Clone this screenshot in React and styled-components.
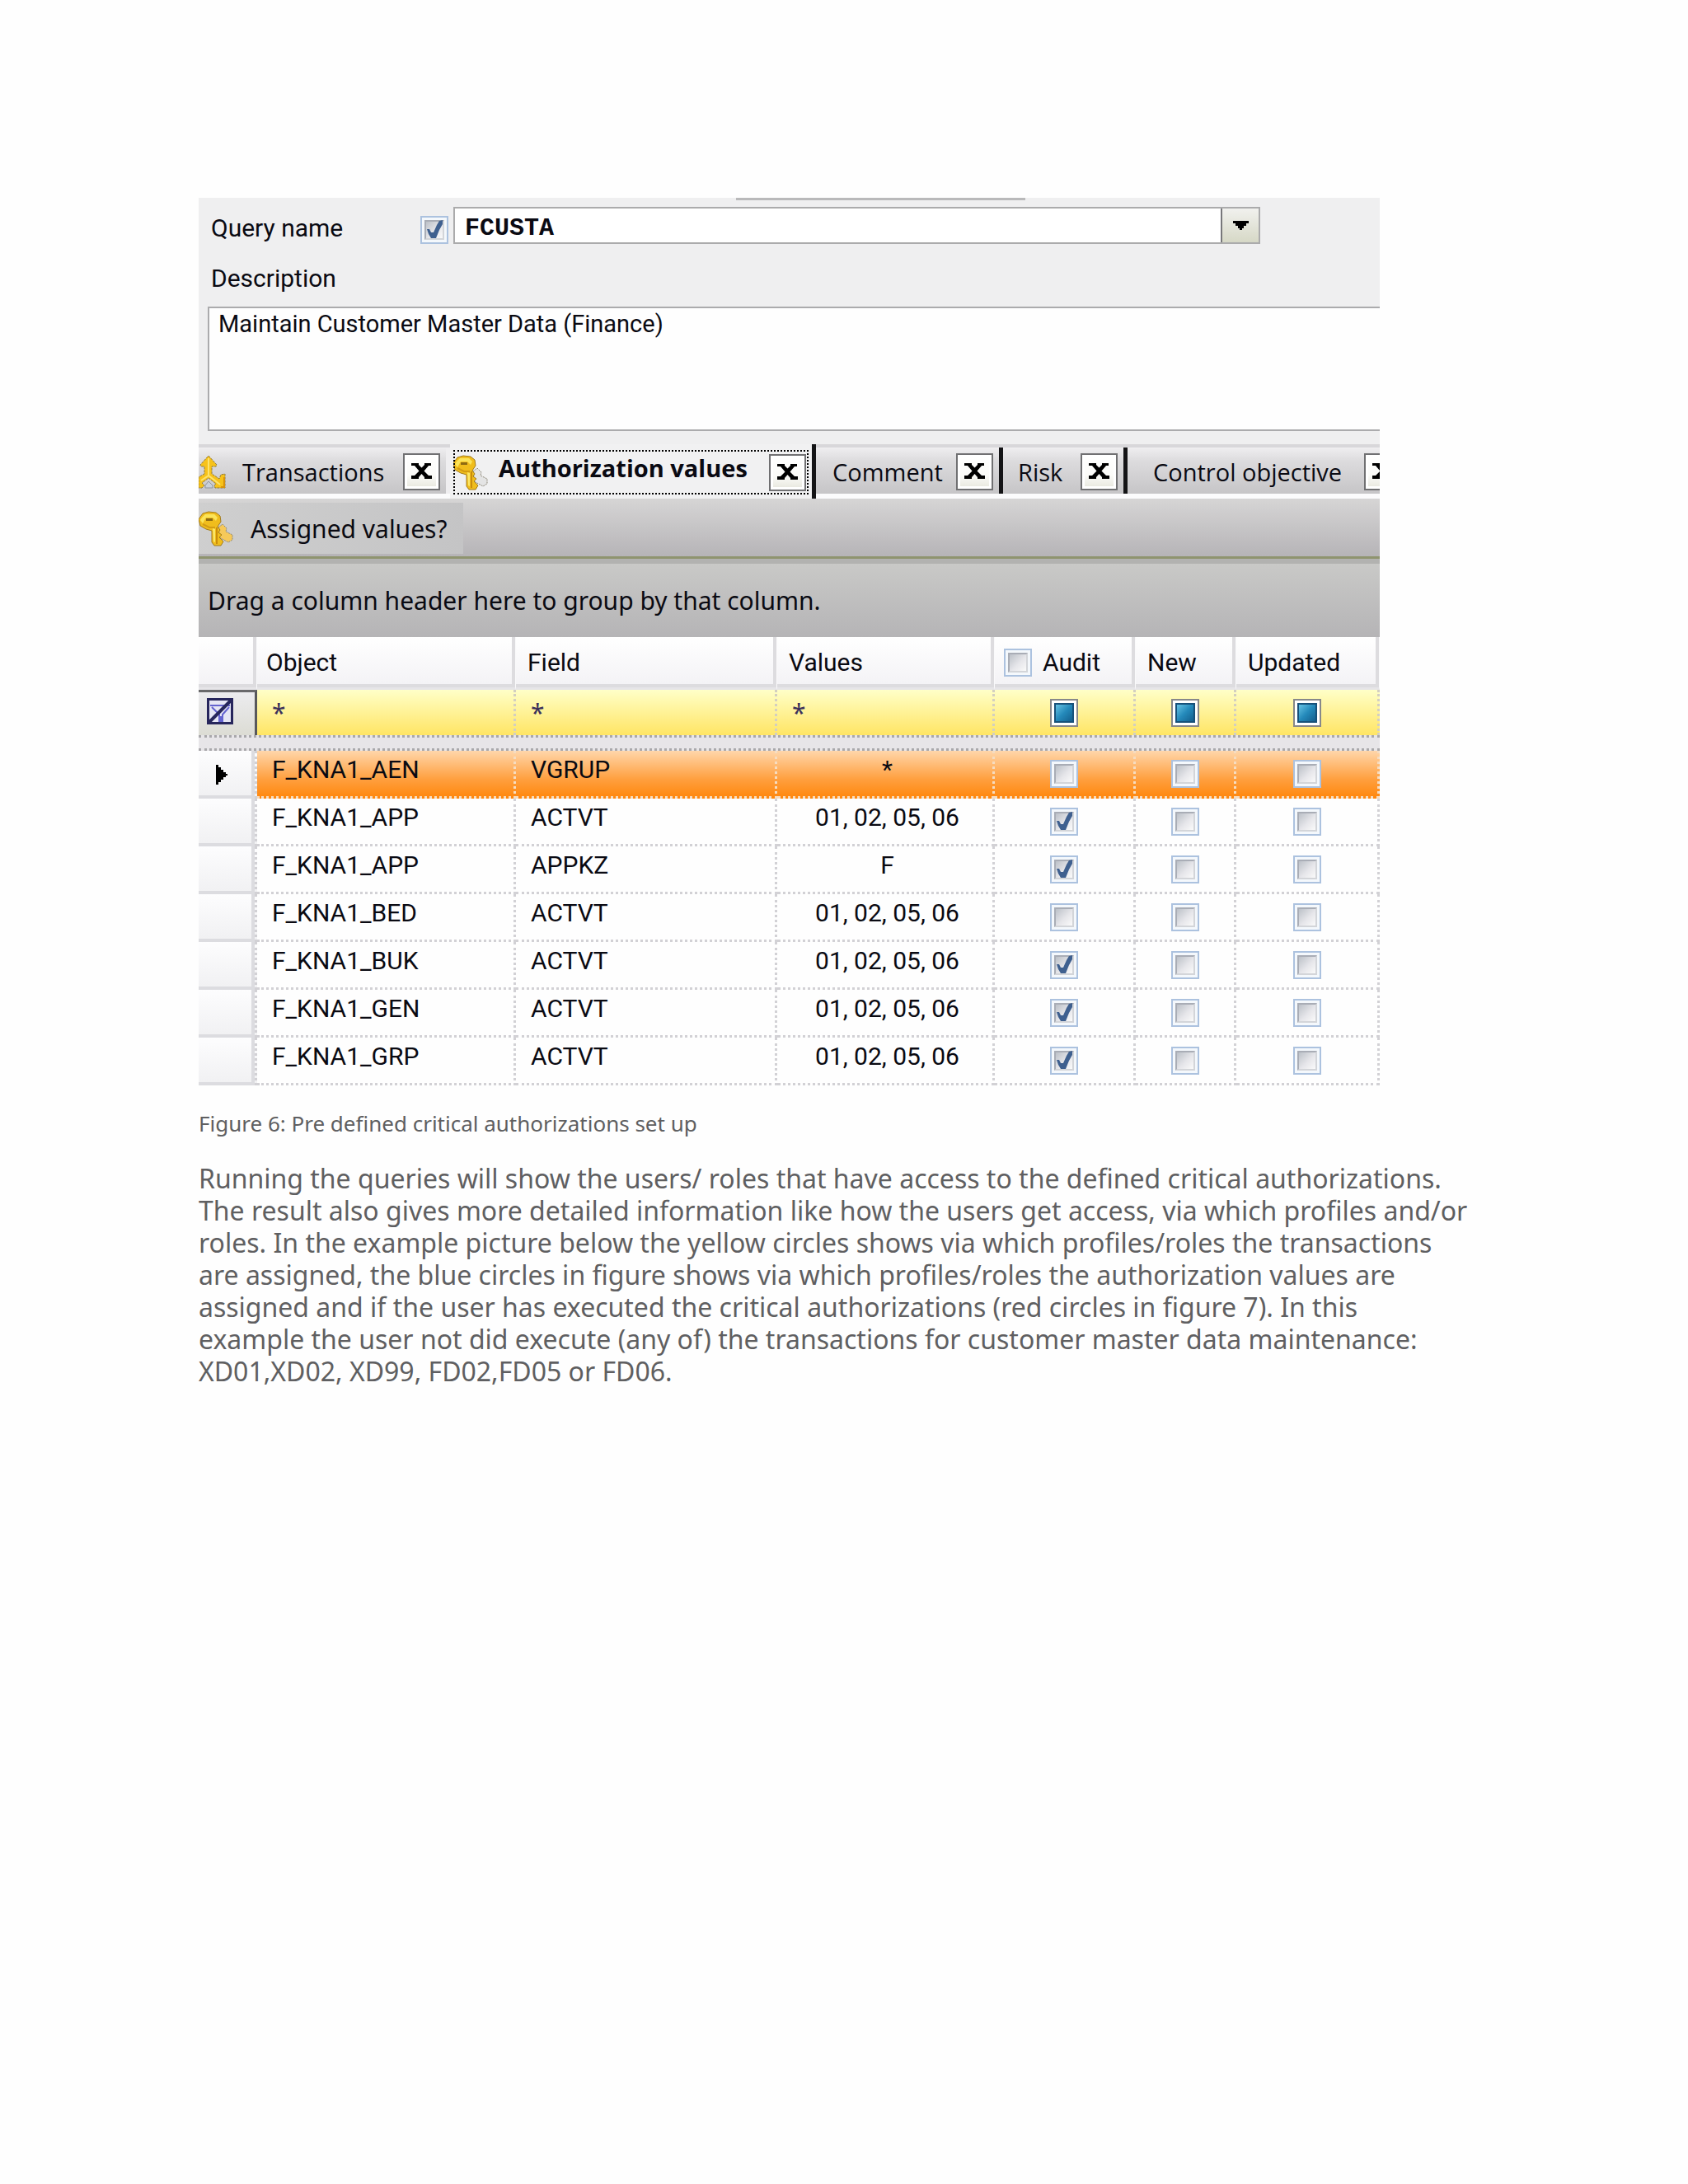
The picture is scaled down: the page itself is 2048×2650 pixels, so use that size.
import React, { useState } from 'react';
import styled, { createGlobalStyle, css } from 'styled-components';

const GlobalStyle = createGlobalStyle`
  *, *::before, *::after {
    box-sizing: border-box;
  }

  body {
    margin: 0;
    background: #fefefe;
  }

  button, input, textarea {
    margin: 0;
    font: inherit;
    color: inherit;
  }
`;

const uiFont = css`
  font-family: Roboto, 'Liberation Sans', sans-serif;
  font-size: 30px;
`;

const tabFont = css`
  font-family: 'Open Sans', 'Noto Sans', sans-serif;
  font-size: 29px;
`;

const barFont = css`
  font-family: 'Noto Sans', 'Open Sans', sans-serif;
  font-size: 30px;
`;

const Page = styled.main`
  min-height: 100vh;
  padding: 240px 241px;
  font-family: 'Noto Sans', 'Open Sans', sans-serif;
  color: #5f5f61;
`;

const Figure = styled.figure`
  margin: 0;
`;

const Window = styled.div`
  ${uiFont}
  margin-right: 133px;
  overflow: hidden;
  color: #0a0a12;
  background: #efeff0;
`;

const Splitter = styled.div`
  width: 351px;
  height: 3px;
  margin-left: 652px;
  background: #b9b9ba;
`;

const Form = styled.form`
  padding: 8px 0 16px 11px;
`;

const QueryRow = styled.div`
  display: flex;
  align-items: flex-end;
  gap: 6px;
  margin-right: 145px;

  > label {
    width: 252px;
    padding-left: 4px;
    line-height: 38px;
  }
`;

const Combo = styled.div`
  display: flex;
  flex: 1;
  height: 45px;
  border: 2px solid #ababac;
  background: #fff;

  input {
    flex: 1;
    min-width: 0;
    padding: 6px 12px 0;
    border: 0;
    outline: 0;
    background: none;
    font-family: 'Liberation Mono', monospace;
    font-weight: 600;
  }

  button {
    display: grid;
    place-items: center;
    width: 46px;
    padding: 0;
    border: 0;
    border-left: 2px solid #77777a;
    background: linear-gradient(#f1f1ee, #d6d8c6);
  }
`;

const DescriptionLabel = styled.label`
  display: block;
  padding: 8px 0 0 4px;
  line-height: 68px;
`;

const Description = styled.textarea`
  display: block;
  width: 100%;
  height: 151px;
  padding: 0 11px;
  border: 2px solid #ababad;
  border-right: 0;
  border-radius: 0;
  outline: 0;
  resize: none;
  background: #fefefe;
  font-size: 29px;
  line-height: 38px;
`;

const TabStrip = styled.div`
  ${tabFont}
  display: flex;
  align-items: flex-start;
  height: 66px;
  background: linear-gradient(#d8d7da 4px, #f3f2f4 4px, #f3f2f4 60px, #fbfbfc 60px);
`;

const Tab = styled.div`
  position: relative;
  display: flex;
  flex: none;
  align-items: center;
  width: ${({ $width }) => $width}px;
  height: 56px;
  margin-top: 4px;
  padding: 2px 7px 0 ${({ $indent }) => $indent || 0}px;
  border-right: ${({ $edge }) => ($edge ? '5px solid #141416' : '5px solid #efeef0')};
  background: linear-gradient(#efeef0, #dcdbdd 30%, #c6c5c7);

  ${({ $active }) =>
    $active &&
    css`
      height: 66px;
      margin-top: 0;
      font-weight: 700;
      background: #f1f1f2;

      &::before {
        content: '';
        position: absolute;
        inset: 7px 4px 5px 4px;
        border: 2px dotted #000;
      }
    `}
`;

const TabLabel = styled.button`
  flex: 1;
  padding: ${({ $active }) => ($active ? '0 0 12px' : '0')};
  border: 0;
  background: none;
  text-align: left;
  white-space: nowrap;
`;

const TabIcon = styled.span`
  display: flex;
  width: ${({ $width }) => $width}px;
  flex: none;
`;

const CloseButton = styled.button`
  position: relative;
  display: grid;
  flex: none;
  place-items: center;
  width: 45px;
  height: 45px;
  padding: 0;
  border: 2px solid #707072;
  background: linear-gradient(#fff, #fbfbf8 60%, #e6e6dc);
  box-shadow: inset 0 0 0 3px #fff;
`;

const Toolbar = styled.div`
  ${barFont}
  display: flex;
  height: 79px;
  padding-top: 5px;
  border-bottom: 6px solid #b2b2b0;
  background: linear-gradient(#d6d5d5, #b6b4b7 70px, #8f946f 70px);
`;

const ToolButton = styled.button`
  display: flex;
  align-items: center;
  gap: 21px;
  height: 62px;
  padding: 0 20px 0 0;
  border: 0;
  background: linear-gradient(100deg, #cfcfcf, #c4c4c5);
`;

const GroupPanel = styled.div`
  ${barFont}
  padding: 0 11px;
  line-height: 89px;
  background: linear-gradient(#c9c9c7, #b5b4b6);
`;

const Grid = styled.table`
  width: 100%;
  table-layout: fixed;
  border-collapse: separate;
  border-spacing: 0;
  background: #fefefe;

  th, td {
    padding: 0;
    font-weight: 400;
    text-align: left;
    white-space: nowrap;
  }
`;

const HeaderCell = styled.th`
  height: 64px;
  border-right: 1px solid #fafafb;
  border-bottom: 3px solid #e6e5e8;
  background: linear-gradient(#fff, #f3f2f5);
  box-shadow: inset -4px -4px 0 #dddcdf;
`;

const HeaderText = styled.div`
  display: flex;
  align-items: center;
  gap: 13px;
  padding-left: ${({ $indent }) => $indent || 11}px;
`;

const FilterRow = styled.tr`
  td {
    height: 55px;
    padding-left: 18px;
    border-right: 3px dotted #d3cfc0;
    background: linear-gradient(#ffffc8, #ffe564);
    color: #3b305a;
    font-family: 'Noto Sans', sans-serif;
  }

  th {
    padding-left: 10px;
    border-top: 3px solid #69696b;
    border-right: 3px solid #58585b;
    background: linear-gradient(#ececef, #dcdcd4);
  }
`;

const SplitRow = styled.tr`
  td {
    height: 19px;
    border-top: 3px dotted #a9a8ab;
    border-bottom: 3px dotted #a9a8ab;
    background: #e7e5e8;
  }
`;

const DataRow = styled.tr`
  td {
    height: 58px;
    border-right: 3px dotted #d2d1d5;
    border-bottom: 3px dotted #d2d1d5;
  }

  ${({ $selected }) =>
    $selected &&
    css`
      td {
        border-color: #f6dcc0;
        background: linear-gradient(#ffd6aa, #ff9f3e 60%, #ff860a) border-box;
      }
    `}
`;

const RowHeader = styled.th`
  border-right: 3px dotted #d2d1d5;
  background: linear-gradient(#fdfdfe, #f0f0f2);
  box-shadow: inset -4px -4px 0 #dcdce0;

  svg {
    display: block;
    margin-left: 21px;
  }
`;

const CellText = styled.div`
  padding: ${({ $center }) => ($center ? '0 0 10px 6px' : '0 0 10px 18px')};
  text-align: ${({ $center }) => ($center ? 'center' : 'left')};
`;

const TickBox = styled.span`
  position: relative;
  display: block;
  flex: none;
  width: 34px;
  height: 34px;
  margin: ${({ $center }) => ($center ? '0 auto' : '0')};

  input {
    appearance: none;
    display: block;
    width: 34px;
    height: 34px;
    padding: 3px;
    border: 2px solid #acc2df;
    background: #f4f8fc;
  }

  input::before {
    content: '';
    display: block;
    width: 24px;
    height: 24px;
    border: 2px solid #a9adb6;
    border-right-color: #d3d5d9;
    border-bottom-color: #d3d5d9;
    background: linear-gradient(135deg, #bcc1c8, #e6e6ea 55%, #fafafa);
  }

  input[data-mixed='true'] {
    border-color: #87888a;
    background: #fff;
  }

  input[data-mixed='true']::before {
    border-color: #17517a;
    background: linear-gradient(135deg, #67c3e4, #2489ba 50%, #145f8d);
  }

  svg {
    position: absolute;
    inset: 0;
    pointer-events: none;
  }
`;

const Caption = styled.figcaption`
  margin-top: 30px;
  font-size: 26px;
  line-height: 32px;
`;

const Body = styled.p`
  margin: 31px 0 0;
  font-size: 32px;
  line-height: 39px;
  white-space: nowrap;
`;

const Check = ({ label, checked = false, mixed = false, center = false }) => {
  const [on, setOn] = useState(checked);

  return (
    <TickBox $center={center}>
      <input
        type="checkbox"
        aria-label={label}
        checked={on}
        data-mixed={mixed}
        onChange={e => setOn(e.target.checked)}
      />
      {on && (
        <svg width="34" height="34" viewBox="0 0 34 34" aria-hidden="true">
          <path d="M8 16H11L13 20H16L20 11L23 6L27 5V10L23 17L19 27H13L10 22Z" fill="#3f608f" />
        </svg>
      )}
    </TickBox>
  );
};

const CloseIcon = () => (
  <svg width="25" height="20" viewBox="0 0 25 20" aria-hidden="true">
    <path
      d="M0 0H9V2L12.5 5.500L16 2V0H24V3H21L15.500 9.500L21 15H25V19H16V17L12.500 13L9 17V19H0V15H4L9.500 9.500L4 3H0Z"
      fill="#000"
    />
  </svg>
);

// gold key with a second one tucked behind it
const KeyIcon = ({ pale }) => (
  <svg width="42" height="43" viewBox="0 0 42 43" aria-hidden="true">
    <path
      d="M24 20L29 16L34 21L33 25L41 29V35L36 38L25 32Z"
      fill={pale ? '#e4e4e4' : '#f6c95a'}
      stroke="#8d8878"
      strokeWidth="1"
      strokeDasharray="2 1"
    />
    <path
      d="M5 3L12 1L21 2L26 6L27 13L23 19L26 23L24 26L28 29L25 32L30 37L27 42H19L16 38V24L9 22L2 18L0 10Z"
      fill="#f0bd1c"
      stroke="#a27b1b"
      strokeWidth="1"
    />
    <path d="M4 8L8 4H19L23 8L21 12L17 8H9L5 15L2 11Z" fill="#fbe45a" />
    <path d="M9 9H17V12H9Z" fill="#8d6a12" />
    <path d="M17 21L20 22V38L18 37Z" fill="#fbe668" />
    <path d="M22 20V40" stroke="#c98c0c" strokeWidth="2" />
    <path d="M5 16L13 20H20" fill="none" stroke="#d39c14" strokeWidth="2" />
  </svg>
);

const FlowIcon = () => (
  <svg width="33" height="41" viewBox="0 0 33 41" aria-hidden="true">
    <path
      d="M12 1L22 12L21 14H16V23L25 29L27 24L32 23V40H20L19 37L21 35L12 28L4 34L7 37L4 40H0V27L7 23V14H3L2 12Z"
      fill="#f7c21a"
      stroke="#8e7a3c"
      strokeWidth="1"
      strokeDasharray="3 1"
    />
    <path d="M12 4V25L3 31M12 25L26 36" fill="none" stroke="#fde46c" strokeWidth="2" />
    <path d="M27 39H31V27" fill="none" stroke="#d8930c" strokeWidth="2" />
    <path d="M8 37L12 32L17 37V40H8Z" fill="#c9d0da" stroke="#8f959e" strokeWidth="1" />
  </svg>
);

const FilterIcon = () => (
  <svg width="32" height="32" viewBox="0 0 32 32" aria-hidden="true">
    <path d="M1.500 1.500H30.500V30.500H1.500Z" fill="#e6e6f5" stroke="#27265c" strokeWidth="3" />
    <path d="M4 9H28M6 11L15 20V29M27 11L19 20V29M17 22V29" fill="none" stroke="#6463cf" strokeWidth="2" />
    <path d="M3 29L29 3" stroke="#27265c" strokeWidth="4" />
  </svg>
);

const tabs = [
  { name: 'Transactions', width: 305, icon: <FlowIcon />, iconWidth: 53 },
  { name: 'Authorization values', width: 444, indent: 4, icon: <KeyIcon pale />, iconWidth: 55, active: true, edge: true },
  { name: 'Comment', width: 227, indent: 20, edge: true },
  { name: 'Risk', width: 151, indent: 18, edge: true },
  { name: 'Control objective', width: 344, indent: 31, edge: true },
];

const columns = [
  { name: 'Object' },
  { name: 'Field', indent: 14 },
  { name: 'Values', indent: 14 },
  { name: 'Audit', check: true },
  { name: 'New', indent: 14 },
  { name: 'Updated', indent: 14 },
];

const rows = [
  { object: 'F_KNA1_AEN', field: 'VGRUP', values: '*', audit: false },
  { object: 'F_KNA1_APP', field: 'ACTVT', values: '01, 02, 05, 06', audit: true },
  { object: 'F_KNA1_APP', field: 'APPKZ', values: 'F', audit: true },
  { object: 'F_KNA1_BED', field: 'ACTVT', values: '01, 02, 05, 06', audit: false },
  { object: 'F_KNA1_BUK', field: 'ACTVT', values: '01, 02, 05, 06', audit: true },
  { object: 'F_KNA1_GEN', field: 'ACTVT', values: '01, 02, 05, 06', audit: true },
  { object: 'F_KNA1_GRP', field: 'ACTVT', values: '01, 02, 05, 06', audit: true },
];

const QueryForm = () => (
  <Form onSubmit={e => e.preventDefault()}>
    <QueryRow>
      <label htmlFor="query">Query name</label>
      <Check label="Use query name" checked />
      <Combo>
        <input id="query" type="text" defaultValue="FCUSTA" spellCheck="false" />
        <button type="button" aria-label="Show queries">
          <svg width="19" height="11" viewBox="0 0 19 11" aria-hidden="true">
            <path d="M0 0H19V3H16V6H13V9H11V11H8V9H6V6H3V3H0Z" fill="#000" />
          </svg>
        </button>
      </Combo>
    </QueryRow>
    <DescriptionLabel htmlFor="description">Description</DescriptionLabel>
    <Description
      id="description"
      defaultValue="Maintain Customer Master Data (Finance)"
      spellCheck="false"
    />
  </Form>
);

const FilterCheckCell = styled.td`
  && {
    padding-left: 0;
  }
`;

const Col = styled.col`
  width: ${({ $width }) => ($width ? `${$width}px` : 'auto')};
`;

const AuthorizationGrid = () => (
  <Grid>
    <colgroup>
      {[71, 314, 317, 264, 171, 122, 0].map((width, i) => (
        <Col key={i} $width={width} />
      ))}
    </colgroup>
    <thead>
      <tr>
        <HeaderCell />
        {columns.map(({ name, indent, check }) => (
          <HeaderCell key={name} scope="col">
            <HeaderText $indent={indent}>
              {check && <Check label="Audit all" />}
              {name}
            </HeaderText>
          </HeaderCell>
        ))}
      </tr>
    </thead>
    <tbody>
      <FilterRow>
        <th>
          <FilterIcon />
        </th>
        <td>*</td>
        <td>*</td>
        <td>*</td>
        {['Audit', 'New', 'Updated'].map(name => (
          <FilterCheckCell key={name}>
            <Check label={`Filter ${name}`} mixed center />
          </FilterCheckCell>
        ))}
      </FilterRow>
      <SplitRow>
        <td colSpan={7} />
      </SplitRow>
      {rows.map(({ object, field, values, audit }, i) => (
        <DataRow key={i} $selected={i === 0}>
          <RowHeader scope="row">
            {i === 0 && (
              <svg width="14" height="24" viewBox="0 0 14 24" aria-hidden="true">
                <path d="M0 0H3V3H6V6H9V9H12V11H14V13H12V15H9V18H6V21H3V24H0Z" fill="#000" />
              </svg>
            )}
          </RowHeader>
          <td>
            <CellText>{object}</CellText>
          </td>
          <td>
            <CellText>{field}</CellText>
          </td>
          <td>
            <CellText $center>{values}</CellText>
          </td>
          <td>
            <Check label={`${object} audit`} checked={audit} center />
          </td>
          <td>
            <Check label={`${object} new`} center />
          </td>
          <td>
            <Check label={`${object} updated`} center />
          </td>
        </DataRow>
      ))}
    </tbody>
  </Grid>
);

const App = () => (
  <>
    <GlobalStyle />
    <Page>
      <Figure>
        <Window>
          <Splitter />
          <QueryForm />
          <TabStrip>
            {tabs.map(({ name, width, indent, icon, iconWidth, active, edge }) => (
              <Tab key={name} $width={width} $indent={indent} $active={active} $edge={edge}>
                {icon && <TabIcon $width={iconWidth}>{icon}</TabIcon>}
                <TabLabel type="button" $active={active}>
                  {name}
                </TabLabel>
                <CloseButton type="button" aria-label={`Close ${name}`}>
                  <CloseIcon />
                </CloseButton>
              </Tab>
            ))}
          </TabStrip>
          <Toolbar>
            <ToolButton type="button">
              <KeyIcon />
              Assigned values?
            </ToolButton>
          </Toolbar>
          <GroupPanel>Drag a column header here to group by that column.</GroupPanel>
          <AuthorizationGrid />
        </Window>
        <Caption>Figure 6: Pre defined critical authorizations set up</Caption>
      </Figure>
      <Body>
        Running the queries will show the users/ roles that have access to the defined critical authorizations.
        <br />
        The result also gives more detailed information like how the users get access, via which profiles and/or
        <br />
        roles. In the example picture below the yellow circles shows via which profiles/roles the transactions
        <br />
        are assigned, the blue circles in figure shows via which profiles/roles the authorization values are
        <br />
        assigned and if the user has executed the critical authorizations (red circles in figure 7). In this
        <br />
        example the user not did execute (any of) the transactions for customer master data maintenance:
        <br />
        XD01,XD02, XD99, FD02,FD05 or FD06.
      </Body>
    </Page>
  </>
);

export default App;
